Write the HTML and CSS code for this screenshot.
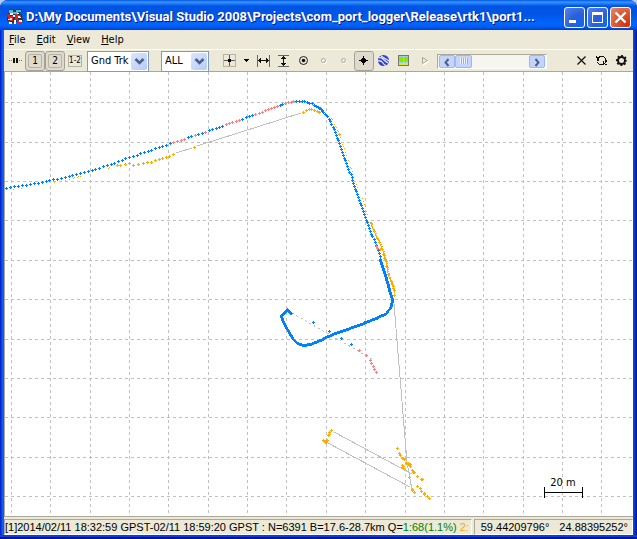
FILE: index.html
```html
<!DOCTYPE html>
<html lang="en">
<head>
<meta charset="utf-8">
<title>port1 plot</title>
<link rel="stylesheet" href="styles.css">
</head>
<body>
<div class="window">
  <header class="titlebar">
    <svg class="app-icon" width="16" height="16" viewBox="0 0 16 16" shape-rendering="crispEdges" aria-hidden="true">
      <path fill="#173a4c" d="M2 0h5v1h2V0h6v3h-2v2h2v4h1v3h-2v2h-3v-1H7v1H2v-2H0v-4h2V7H1V4h1z"/>
      <path fill="#55b8cc" d="M2 1h4v3H2zM9 1h5v2H9zM6 3h5v2H6z"/>
      <path fill="#f2f7f7" d="M3 4h3v2H3zM6 6h2v2H6zM10 7h4v2h-4zM1 9h4v2H1zM7 11h2v4H7zM12 11h3v2h-3zM2 13h3v2H2zM10 4h2v1h-2z"/>
      <path fill="#e02020" d="M1 5h2v2h3v2H3v1H1zM8 5h3v1h3v2h-1V7h-2v4H8V9H6v3H3v-1h2V9h3zM10 11h2v2h3v2h-4v-1h-1zM1 12h2v1H1z"/>
    </svg>
    <h1 class="title">D:\My Documents\Visual Studio 2008\Projects\com_port_logger\Release\rtk1\port1...</h1>
    <div class="caption-buttons">
      <button class="caption" aria-label="Minimize"><svg width="19" height="19"><path fill="#fff" d="M4 12h7v3H4z"/></svg></button>
      <button class="caption" aria-label="Maximize"><svg width="19" height="19"><path fill="#fff" fill-rule="evenodd" d="M4 4h11v11H4zM5 7v7h9V7z"/></svg></button>
      <button class="caption close" aria-label="Close"><svg width="19" height="19"><path stroke="#fff" stroke-width="2.4" d="M4.500 4.500l10 10M14.500 4.500l-10 10"/></svg></button>
    </div>
  </header>
  <nav class="menubar">
    <a href="#file"><u>F</u>ile</a>
    <a href="#edit"><u>E</u>dit</a>
    <a href="#view"><u>V</u>iew</a>
    <a href="#help"><u>H</u>elp</a>
  </nav>
  <div class="toolbar">
    <button class="tool" aria-label="Connect"><svg width="20" height="20" shape-rendering="crispEdges"><path fill="#111" d="M8 7h2v5H8zM11 7h2v5h-2z"/><path fill="#777" d="M4 9h1v1H4zM6 9h1v1H6zM14 9h1v1h-1zM16 9h1v1h-1z"/></svg></button>
    <button class="tool pressed framed"><span>1</span></button>
    <button class="tool pressed framed"><span>2</span></button>
    <button class="tool diff"><span>1-2</span></button>
    <div class="combo combo-type">
      <select aria-label="Plot type"><option>Gnd Trk</option></select>
      <svg class="drop" width="17" height="17" aria-hidden="true"><path d="M4.500 6l4 4 4-4" fill="none" stroke="#4d6185" stroke-width="2.600"/></svg>
    </div>
    <div class="combo combo-quality">
      <select aria-label="Quality"><option>ALL</option></select>
      <svg class="drop" width="17" height="17" aria-hidden="true"><path d="M4.500 6l4 4 4-4" fill="none" stroke="#4d6185" stroke-width="2.600"/></svg>
    </div>
    <div class="tools">
      <button class="tool" aria-label="Center on origin"><svg width="20" height="20" shape-rendering="crispEdges"><path fill="none" stroke="#b5b3a8" d="M4.500 3.500h12v12h-12z"/><path fill="#555" d="M5 9h11v1H5zM10 4h1v11h-1z"/><path fill="#000" d="M9 8h3v3H9z"/></svg></button>
      <button class="tool narrow" aria-label="Origin options"><svg width="12" height="20" shape-rendering="crispEdges"><path fill="#000" d="M3 8h5v1H3zM4 9h3v1H4zM5 10h1v1H5z"/></svg></button>
      <button class="tool" aria-label="Fit horizontal"><svg width="20" height="20" shape-rendering="crispEdges"><path fill="#666" d="M3 4h1v12H3zM15 4h1v12h-1z"/><path fill="#111" d="M4 9h11v1H4zM5 8h2v3H5zM6 7h1v5H6zM12 8h2v3h-2zM12 7h1v5h-1z"/></svg></button>
      <button class="tool" aria-label="Fit vertical"><svg width="20" height="20" shape-rendering="crispEdges"><path fill="#666" d="M4 4h11v1H4zM4 15h11v1H4z"/><path fill="#111" d="M9 5h1v10H9zM8 6h3v2H8zM7 7h5v1H7zM8 12h3v2H8zM7 12h5v1H7z"/></svg></button>
      <button class="tool" aria-label="Show track points"><svg width="20" height="20"><circle cx="9.500" cy="9.500" r="4" fill="none" stroke="#222"/><circle cx="9.500" cy="9.500" r="1.800" fill="#111"/></svg></button>
      <button class="tool" aria-label="Fix center" disabled><svg width="20" height="20"><circle cx="10.500" cy="10.500" r="2" fill="none" stroke="#fff"/><circle cx="9.500" cy="9.500" r="2" fill="none" stroke="#aca899"/></svg></button>
      <button class="tool" aria-label="Fix horizontal" disabled><svg width="20" height="20"><circle cx="10.500" cy="10.500" r="2" fill="none" stroke="#fff"/><circle cx="9.500" cy="9.500" r="2" fill="none" stroke="#aca899"/></svg></button>
      <button class="tool pressed" aria-label="Show track"><svg width="18" height="18" shape-rendering="crispEdges"><path fill="#000" d="M4 8h9v1H4zM8 4h1v9H8zM6 7h5v3H6zM7 6h3v5H7z"/></svg></button>
      <button class="tool" aria-label="Google Earth view"><svg width="20" height="20"><circle cx="9.500" cy="9.500" r="5.500" fill="#3540c8"/><path d="M7 5l8 5M5 7q2-1 4 1t5 4M4 10q3-1 5 2t3 2" fill="none" stroke="#e8ecff" stroke-width="1.300"/></svg></button>
      <button class="tool" aria-label="Google Map view"><svg width="20" height="20" shape-rendering="crispEdges"><path fill="#8bd8e0" stroke="#77776f" d="M4.500 4.500h10v10h-10z"/><path fill="#96e000" d="M5 6h4v4H5zM10 6h4v4h-4zM6 9h3v2H6zM11 10h2v1h-2z"/><path fill="#e5e33b" d="M5 12h9v2H5z"/></svg></button>
      <button class="tool" aria-label="Animate" disabled><svg width="20" height="20"><path fill="#fff" d="M9 7v8l6-4z"/><path d="M8.500 6.500v6l5-3z" fill="#ece9d8" stroke="#aca899"/></svg></button>
    </div>
    <div class="scroller">
      <button class="arrow" aria-label="Back"><svg width="14" height="13"><path fill="none" stroke="#4d6185" stroke-width="2" d="M8.500 3l-3 3.500 3 3.500"/></svg></button>
      <input type="range" aria-label="Time position" min="0" max="100" value="0">
      <button class="arrow" aria-label="Forward"><svg width="14" height="13"><path fill="none" stroke="#4d6185" stroke-width="2" d="M5.500 3l3 3.500-3 3.500"/></svg></button>
    </div>
    <div class="tools end">
      <button class="tool" aria-label="Clear"><svg width="20" height="20"><path stroke="#111" stroke-width="1.200" d="M5.500 5.500l8 8M13.500 5.500l-8 8"/></svg></button>
      <button class="tool" aria-label="Reload"><svg width="20" height="20" shape-rendering="crispEdges"><path fill="#111" d="M7 5h5v1H7zM6 6h2v1H6zM5 7h2v3H5zM4 5h1v1h1v1H4zM12 6h1v1h-1zM13 7h1v5h-1zM7 13h5v1H7zM11 12h2v1h-2zM6 12h1v1H6zM13 13h2v1h-2zM11 10h1v2h-1zM14 9h1v2h-1zM5 11h1v1H5z"/></svg></button>
      <button class="tool" aria-label="Options"><svg width="20" height="20"><circle cx="9.500" cy="9.500" r="3.500" fill="none" stroke="#111" stroke-width="2"/><circle cx="9.500" cy="9.500" r="4.800" fill="none" stroke="#111" stroke-width="1.600" stroke-dasharray="1.900 1.870" stroke-dashoffset="1"/></svg></button>
    </div>
  </div>
  <main class="plot">
    <svg id="plot" viewBox="5 72 628 444" preserveAspectRatio="xMidYMid slice" shape-rendering="crispEdges" role="img" aria-label="Ground track">
      <g id="grid" class="grid"></g>
      <g class="links">
        <path d="M176 153L192 148M197 146L301 113M394 304L407 462M334 432L412 474M328 443L410 487M407 462L412 490"/>
        <path class="dotted" d="M292 313L372 359"/>
      </g>
      <g id="track"></g>
      <path class="scale" d="M544.500 487v11M582.500 487v11M544 492.500h39"/>
      <text class="scale-label" x="563" y="486">20 m</text>
    </svg>
  </main>
  <footer class="statusbar">
    <div class="status info">[1]2014/02/11 18:32:59 GPST-02/11 18:59:20 GPST : N=6391 B=17.6-28.7km Q=<span class="q1">1:68(1.1%)</span> <span class="q2">2:</span></div>
    <div class="status position"><span>59.44209796°</span><span>24.88395252°</span></div>
  </footer>
</div>
<script src="plot.js"></script>
</body>
</html>
```
FILE: styles.css
```css
* { box-sizing: border-box; }

body {
  margin: 0;
  background: #b8c8e8;
  color: #000;
  font: 11px/14px "DejaVu Sans Condensed", "Liberation Sans", sans-serif;
}

button, select, input { font: inherit; color: inherit; margin: 0; padding: 0; }
svg { display: block; }

.window {
  display: flex;
  flex-direction: column;
  height: 100vh;
  padding: 0 4px 4px;
  border-radius: 8px 8px 0 0;
  overflow: hidden;
  background: linear-gradient(90deg, #0019cf, #0831d9 1px, #166aee 3px, #0855dd 4px, #0855dd calc(100% - 4px), #0441d8 calc(100% - 3px), #001590);
  box-shadow: inset 0 -2px #00138c, inset 0 -4px #0441d8;
}

.titlebar {
  display: flex;
  flex: none;
  align-items: center;
  height: 30px;
  margin: 0 -4px;
  padding: 4px 6px 0 7px;
  background: linear-gradient(#0058e0, #3a93ff 2px, #1a78f6 4px, #0054e3 6px, #0055e5 14px, #0066ff 24px, #005bf0 27px, #003dd0 30px);
}

.app-icon { flex: none; }

.title {
  flex: 1;
  min-width: 0;
  margin: 0 0 0 3px;
  overflow: hidden;
  color: #fff;
  font: bold 13px/18px Roboto, sans-serif;
  text-shadow: 1px 1px #0a1883;
  white-space: nowrap;
}

.caption-buttons { display: flex; gap: 2px; }

.caption {
  width: 21px;
  height: 21px;
  border: 1px solid #fff;
  border-radius: 3px;
  background: radial-gradient(circle at 85% 85%, #1267ee, #2a5fdc 45%, #5585e8);
}

.caption.close { background: radial-gradient(circle at 85% 85%, #c93610, #dc5530 50%, #e88a6c); }

.menubar {
  display: flex;
  flex: none;
  gap: 11px;
  height: 19px;
  padding: 3px 5px 2px;
  background: #ece9d8;
}

.menubar a { color: #000; text-decoration: none; }

.toolbar {
  display: flex;
  flex: none;
  align-items: center;
  height: 23px;
  padding: 1px 1px 0;
  border-top: 1px solid #fff;
  border-bottom: 1px solid #aca899;
  background: #ece9d8;
}

.tool {
  display: flex;
  flex: none;
  align-items: center;
  justify-content: center;
  width: 20px;
  height: 20px;
  border: 0;
  background: none;
}

.tool.narrow { width: 15px; }

.tool.pressed {
  border: 1px solid #a5a295;
  border-radius: 3px;
  background: #dedbcd;
}

.framed span {
  width: 14px;
  height: 14px;
  border: 1px solid #b5b3a8;
  border-radius: 2px;
  font-size: 10px;
  line-height: 12px;
}

.diff span {
  width: 14px;
  height: 12px;
  border: 1px solid #b5b3a8;
  font-size: 8px;
  line-height: 10px;
}

.tools { display: flex; }
.tools.end { margin-left: auto; }

.combo {
  position: relative;
  flex: none;
  height: 21px;
}

.combo-type { width: 62px; margin: 0 12px 0 2px; }
.combo-quality { width: 48px; margin-right: 10px; }

.combo select {
  width: 100%;
  height: 100%;
  padding-left: 3px;
  border: 1px solid #7f9db9;
  border-radius: 0;
  background: #fff;
  appearance: none;
}

.drop {
  position: absolute;
  top: 2px;
  right: 2px;
  width: 16px;
  height: 17px;
  border-radius: 2px;
  background: linear-gradient(135deg, #dbe5fe, #b6cbf8);
  pointer-events: none;
}

.scroller {
  display: flex;
  align-items: center;
  width: 110px;
  height: 15px;
  margin-left: 3px;
  padding: 1px;
  border: 1px solid;
  border-color: #aca899 #fff #fff #aca899;
  background: #f6f5f0;
}

.arrow {
  flex: none;
  width: 16px;
  height: 13px;
  border: 1px solid #9db8ee;
  border-radius: 2px;
  background: #c4d4fc;
}

.scroller input {
  flex: 1;
  min-width: 0;
  height: 13px;
  background: none;
  appearance: none;
}

.scroller input::-webkit-slider-thumb {
  width: 17px;
  height: 13px;
  border: 1px solid #9db8ee;
  border-radius: 2px;
  background: repeating-linear-gradient(90deg, #eef4fe 0 1px, #8cb0f8 1px 2px) center / 8px 6px no-repeat #c4d4fc;
  appearance: none;
}

.plot {
  flex: 1;
  min-height: 0;
  border-left: 1px solid #aca899;
  background: #fff;
}

.plot svg { width: 100%; height: 100%; }

.grid { fill: none; stroke: #c0c0c0; stroke-dasharray: 3 3; }
.links { fill: none; stroke: #c0c0c0; }
.dotted { stroke-dasharray: 2 3; }
.scale { fill: none; stroke: #000; }
.scale-label { font-size: 11px; text-anchor: middle; }
.fix { fill: none; stroke: #0080ff; }
.float { fill: none; stroke: #ffaa00; }
.single { fill: none; stroke: #ff8080; }

.statusbar {
  display: flex;
  flex: none;
  gap: 2px;
  height: 19px;
  padding-top: 2px;
  border-top: 1px solid #aca899;
  background: #ece9d8;
  font-family: "Liberation Sans", sans-serif;
}

.status {
  height: 16px;
  border: 1px solid;
  border-color: #aca899 #fff #fff #aca899;
  line-height: 14px;
  white-space: pre;
}

.info { flex: 1; min-width: 0; overflow: hidden; }
.position { display: flex; flex: none; gap: 10px; padding: 0 4px 0 6px; }
.q1 { color: #008000; }
.q2 { color: #ffaa00; }
```
FILE: plot.js
```js
const NS = "http://www.w3.org/2000/svg";

function add(parent, cls, d) {
  const path = document.createElementNS(NS, "path");
  if (cls) path.setAttribute("class", cls);
  path.setAttribute("d", d);
  document.getElementById(parent).appendChild(path);
}

function points(text) {
  return text.trim().split(/\s+/).map(p => p.split(",").map(Number));
}

function crosses(cls, list) {
  add("track", cls, list.map(([x, y]) => `M${x - 1} ${y + .5}h3M${x + .5} ${y - 1}v3`).join(""));
}

function dots(cls, list) {
  add("track", cls, list.map(([x, y]) => `M${x} ${y + .5}h1`).join(""));
}

// Samples a polyline at a constant spacing.
function sample(list, step) {
  const out = [];
  let carry = 0;
  for (let i = 1; i < list.length; i++) {
    const [x0, y0] = list[i - 1], [x1, y1] = list[i];
    const len = Math.hypot(x1 - x0, y1 - y0);
    let t = carry;
    for (; t < len; t += step) {
      out.push([Math.round(x0 + (x1 - x0) * t / len), Math.round(y0 + (y1 - y0) * t / len)]);
    }
    carry = t - len;
  }
  return out;
}

let grid = "";
for (const x of [11, 50, 90, 129, 168, 208, 247, 286, 326, 365, 405, 444, 483, 523, 562, 601]) grid += `M${x + .5} 72V516`;
for (const y of [102, 142, 181, 220, 260, 299, 339, 378, 417, 457, 496]) grid += `M5 ${y + .5}H633`;
add("grid", "", grid);

crosses("float", points(`117,165 120,165 125,164 129,163 133,165 138,164 143,163 147,162 151,162
  155,160 159,159 162,158 166,157 169,156 173,154 194,147 303,112 306,110 309,109 311,109 314,110 317,111 319,112
  339,134 371,223 374,231 377,238 379,242 380,249 383,254 384,258 386,261 386,266 388,274 391,281 392,284 393,286
  393,288 394,290 394,295
  331,430 329,432 329,434 328,435 323,440 325,441 327,440 326,442 325,442
  397,448 399,453 400,455 402,458 404,459 403,466 402,465 402,467 403,468 406,463 408,463 410,464 409,465 410,466
  412,470 413,472 414,472 417,476 421,479 422,479 409,477 412,489 412,490 414,492 417,486 420,488 421,491 424,493
  424,494 427,496 429,498`));
dots("float", points(`13,189 21,188 54,182 55,181 65,180 69,179 73,178 74,177 77,177 78,176 80,176 108,168 109,167
  331,118 332,119 334,124 335,126 336,127 337,130 338,131 340,137 342,144 343,146 344,148 345,152 346,155 348,160
  350,167 351,168 352,171 356,184 357,187 362,198 363,201 364,204 365,206 366,211 367,214`));
dots("float", sample(points("370,222 374,232 379,242 383,252 386,263 388,275 392,285 394,292"), 1));
dots("float", sample(points("371,222 375,232 380,242 384,252 387,263 389,275 393,285"), 2));

crosses("fix", points(`6,188 10,187 14,186 18,186 22,185 26,185 30,184 34,183 38,183 42,182 46,181 49,180 53,179
  57,179 61,178 65,177 69,176 72,175 76,174 80,173 84,172 88,171 92,170 95,169 99,168 103,166 107,165 111,164
  114,163 118,161 122,160 125,158 129,157 133,156 137,155 140,153 144,152 148,151 151,150 155,148 159,147
  162,146 166,145 170,143 188,137 191,136 198,134 202,133 209,130 212,129 216,128 219,127 222,126 242,119
  246,117 249,116 252,115 280,105 282,104 296,101 299,101 302,101 304,101 307,102 309,103 312,103 314,105
  316,106 318,107 320,108 322,110 313,322 329,331 341,338 351,344`));
crosses("fix", sample(points("314,105 320,108 323,112 327,116"), 2));
crosses("fix", sample(points("327,116 330,121 334,130 338,139 342,151 347,167 351,175 354,186 358,196 364,213 371,233 376,245 379,252 380,260"), 3));
crosses("fix", sample(points(`380,260 383,269 387,282 390,293 392,300 391,306 386,313 378,317 363,323 347,329 332,334
  320,340 310,344 303,345 297,343 292,338 288,331 283,322 281,315 284,313 287,309 289,311 291,314`), 1));
crosses("fix", sample(points("285,311 288,310 291,313"), 1));
crosses("single", points(`173,142 177,141 181,140 184,139 195,135 205,132 226,124 229,123 232,122 236,121 239,120
  255,114 259,113 262,112 265,110 268,109 271,108 274,107 277,106 285,103 288,102 291,102 293,101 376,246 377,248
  359,350 366,355 370,360 371,363 373,366 374,369 376,372`));
```
